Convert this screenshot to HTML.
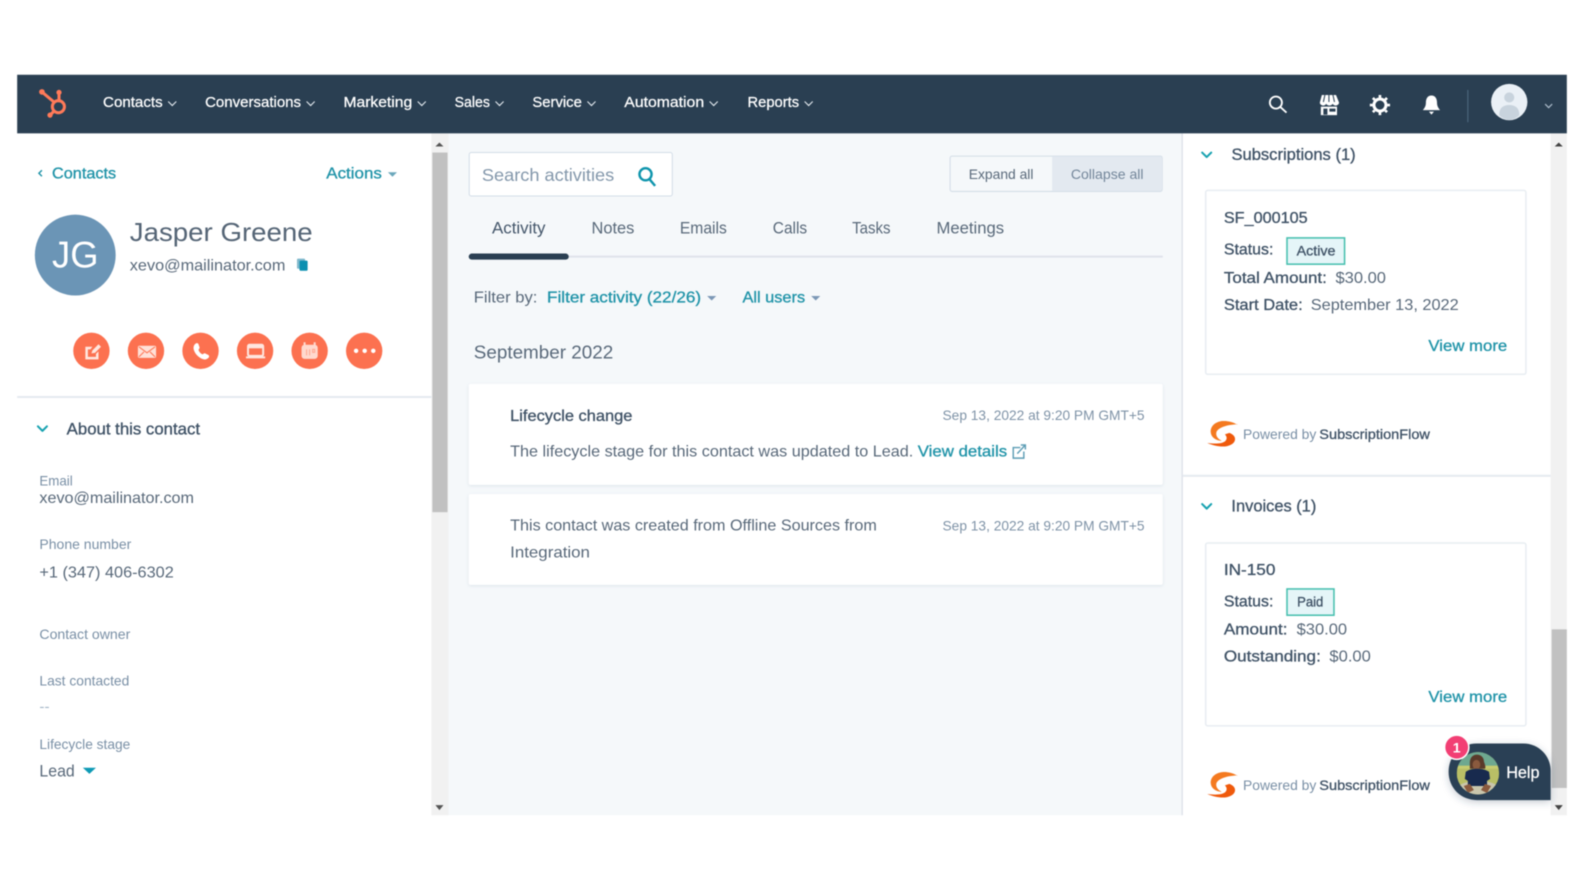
<!DOCTYPE html>
<html><head><meta charset="utf-8"><title>Jasper Greene</title>
<style>
html,body{margin:0;padding:0;background:#fff;width:1584px;height:891px;overflow:hidden}
svg{display:block;filter:blur(.45px)}
text{font-family:"Liberation Sans",sans-serif;fill:#33475b;font-size:15px}
.n{fill:#fff;font-size:15px;stroke:#fff;stroke-width:.25}
.m{fill:#3f5266;stroke:#3f5266;stroke-width:.3}
.l{fill:#1f93a8;font-size:15.5px;stroke:#1f93a8;stroke-width:.3}
.g{fill:#516f90;font-size:14px}
.t{fill:#59697a;font-size:16px}
.c{fill:none;stroke:#fff;stroke-width:1.2}
.tl{fill:none;stroke:#17a2b0;stroke-width:2;stroke-linecap:round;stroke-linejoin:round}
.gb{fill:#59697a}
</style></head><body>
<svg width="1584" height="891" viewBox="0 0 1568 882" xmlns="http://www.w3.org/2000/svg">
<defs>
<filter id="sh" x="-5%" y="-10%" width="110%" height="125%"><feDropShadow dx="0" dy="1" stdDeviation="1.5" flood-color="#a0b4c8" flood-opacity=".3"/></filter>
<filter id="sh2" x="-20%" y="-20%" width="140%" height="150%"><feDropShadow dx="0" dy="2" stdDeviation="4" flood-color="#33475b" flood-opacity=".28"/></filter>
<g id="sfl"><path d="M30 4.500C25 1.500 20 .5 15 .8 8 1.500 3 6 3.500 12c.4 5 5 8 11 8.500-3.500-2-6-4.500-5.500-8 .8-4.500 9-8 21-8.500z" fill="#f47a20"/><path d="M22 12.500c4 1.500 6 4 5.500 7-.8 4-6 6.500-12 6.500-5 0-10-1.200-15.500-3.500 8 1 15 .8 18-2 2-2 1.500-4.500-.5-6.500z" fill="#ef5a0c"/></g>
</defs>
<rect width="1568" height="882" fill="#fff"/>

<!-- app panels -->
<rect x="17" y="132" width="410" height="675" fill="#fff"/>
<rect x="427" y="132" width="17" height="675" fill="#f1f1f1"/>
<rect x="428" y="151" width="15" height="356" fill="#c1c1c1"/>
<path d="M431 145l4-4 4 4zM431 797l4 5 4-5z" fill="#555"/>
<rect x="444" y="132" width="726" height="675" fill="#f5f8fa"/>
<rect x="1169.500" y="132" width="1.500" height="675" fill="#dfe3eb"/>
<rect x="1171" y="132" width="364.500" height="675" fill="#fff"/>
<rect x="1535" y="132" width="16" height="675" fill="#f1f1f1"/>
<rect x="1536" y="623" width="15" height="157" fill="#c1c1c1"/>
<path d="M1539 145l4-4 4 4zM1539 797l4 5 4-5z" fill="#444"/>

<!-- nav -->
<rect x="17" y="74" width="1534" height="58" fill="#2a3f52"/>
<g fill="none" stroke="#ff7a59" stroke-width="3" stroke-linecap="round">
<circle cx="57.800" cy="105.600" r="6"/>
<path d="M41.500 91L52.800 100.500M58.400 91.800v8M53.500 110l-4 4"/>
</g>
<circle cx="41.500" cy="91" r="2.800" fill="#ff7a59"/><circle cx="58.400" cy="91.500" r="2.600" fill="#ff7a59"/><circle cx="49.500" cy="114" r="2.600" fill="#ff7a59"/>
<text class="n" x="102" y="106" textLength="59" lengthAdjust="spacingAndGlyphs">Contacts</text>
<text class="n" x="203" y="106" textLength="95" lengthAdjust="spacingAndGlyphs">Conversations</text>
<text class="n" x="340" y="106" textLength="68" lengthAdjust="spacingAndGlyphs">Marketing</text>
<text class="n" x="450" y="106" textLength="35" lengthAdjust="spacingAndGlyphs">Sales</text>
<text class="n" x="527" y="106" textLength="49" lengthAdjust="spacingAndGlyphs">Service</text>
<text class="n" x="618" y="106" textLength="79" lengthAdjust="spacingAndGlyphs">Automation</text>
<text class="n" x="740" y="106" textLength="51" lengthAdjust="spacingAndGlyphs">Reports</text>
<path d="M166.500 100.500l4 4 4-4M303.500 100.500l4 4 4-4M413.500 100.500l4 4 4-4M490.500 100.500l4 4 4-4M581.500 100.500l4 4 4-4M702.500 100.500l4 4 4-4M796.500 100.500l4 4 4-4" fill="none" stroke="#dfe6ec" stroke-width="1.100"/>
<!-- right nav icons -->
<g fill="none" stroke="#fff" stroke-width="1.800"><circle cx="1263" cy="101.500" r="6"/><path d="M1267.500 106l6 5.500"/></g>
<g fill="#fff"><path d="M1308.500 94h14l3 7.500c0 2-2 3-3.500 3-1.300 0-2.300-.8-2.800-1.800-.5 1-1.600 1.800-3.200 1.800s-2.700-.8-3.200-1.800c-.5 1-1.500 1.800-2.800 1.800-1.500 0-3.500-1-3.500-3z"/><path d="M1307.500 105.500h16V114h-16z"/></g>
<path d="M1311.500 94l-1.500 7M1315.500 94v7M1319.500 94l1.500 7" stroke="#2a3f52" stroke-width="1"/>
<rect x="1310" y="107.500" width="4" height="6" fill="#2a3f52"/><rect x="1316" y="107.500" width="6" height="3" fill="#2a3f52"/>
<circle cx="1366" cy="104" r="6" fill="none" stroke="#fff" stroke-width="3"/>
<path d="M1366 94v20M1356 104h20M1359 97l14 14M1373 97l-14 14" stroke="#fff" stroke-width="2.600" stroke-dasharray="2.600 14.800"/>
<path d="M1417 94.500c4 0 5.500 3.500 5.500 7 0 4 1.500 5.500 3 7.500h-17c1.500-2 3-3.500 3-7.500 0-3.500 1.500-7 5.500-7zM1414.500 110.500h5l-2.500 3z" fill="#fff"/>
<rect x="1452.500" y="89" width="1" height="32" fill="#4f6b82"/>
<circle cx="1494" cy="101" r="18" fill="#eaf0f6"/>
<circle cx="1494" cy="96.500" r="5" fill="#c8d3dd"/>
<path d="M1484 114c0-7 4-10 10-10s10 3 10 10c-3 3-6 4.500-10 4.500s-7-1.500-10-4.500z" fill="#c8d3dd"/>
<path d="M1529.500 103l3.500 3.500 3.500-3.500" fill="none" stroke="#a9b9c8" stroke-width="1.200"/>

<!-- left panel -->
<path d="M41.500 168.500l-3 3 3 3" fill="none" stroke="#1f93a8" stroke-width="1.400"/>
<text class="l" x="51.500" y="176.500" textLength="63.500" lengthAdjust="spacingAndGlyphs">Contacts</text>
<text class="l" x="323" y="176.500" textLength="55" lengthAdjust="spacingAndGlyphs">Actions</text>
<path d="M384 170.500h9l-4.500 4.500z" fill="#6ba7bb"/>
<circle cx="74.500" cy="252.500" r="40" fill="#6b95b6"/>
<text x="74.500" y="265" text-anchor="middle" textLength="46" lengthAdjust="spacingAndGlyphs" style="fill:#fff;font-size:37px">JG</text>
<text x="128.500" y="238.500" textLength="181" lengthAdjust="spacingAndGlyphs" style="font-size:26px;fill:#556576">Jasper Greene</text>
<text x="128.500" y="268" textLength="154" lengthAdjust="spacingAndGlyphs" class="gb" style="font-size:15.500px">xevo@mailinator.com</text>
<rect x="294" y="256" width="8" height="10" rx="1" fill="#7fb8cc"/><rect x="296.500" y="258" width="8" height="10" rx="1" fill="#0a8fb0"/>

<g transform="translate(.5 .3)">
<g fill="#fc7150"><circle cx="90" cy="347" r="18"/><circle cx="144" cy="347" r="18"/><circle cx="198" cy="347" r="18"/><circle cx="252" cy="347" r="18"/><circle cx="306" cy="347" r="18"/><circle cx="360" cy="347" r="18"/></g>
<path d="M84 343h7l-2 2.500h-2.500v7.500h8v-3l2.500-2.500V355.500H84z" fill="#ffe6df"/><path d="M90 349.500l1-3 6-6 2.500 2.500-6 6z" fill="#ffe6df"/>
<rect x="136" y="342" width="18" height="12" rx="1.500" fill="#ffe1d8"/><path d="M137 343l8 6 8-6M137 353l5-5M153 353l-5-5" fill="none" stroke="#ff7a59" stroke-width="1.100"/>
<path d="M193 340c1-1 2.500-1 3 .5l1 3c.3 1-.5 1.500-1 2.500.5 2 2 3.500 4 4.500 1-.5 1.500-1.300 2.500-1l3 1.500c1.300.7 1.300 2 .3 3-2 2-4.500 2-7.500.3-3.500-2-6-5-7-8.500-.5-2.500 0-4.500 1.700-5.800z" fill="#fff"/>
<rect x="245" y="341" width="15" height="11" rx="1.500" fill="none" stroke="#ffe6df" stroke-width="2"/><rect x="245" y="341" width="15" height="3.500" fill="#ffe6df"/><path d="M243 353.500h19" stroke="#ffe6df" stroke-width="2"/>
<rect x="298" y="341" width="16" height="14" rx="3" fill="#ffd9ce"/><path d="M301 338.500v4M311 338.500v4" stroke="#ffd9ce" stroke-width="2"/><path d="M303 345.500v6M306 345.500v6M309 345.500h2v3h-2z" stroke="#ffa58e" stroke-width="1" fill="none"/>
<circle cx="352" cy="347" r="2.200" fill="#fff"/><circle cx="360.500" cy="347" r="2.200" fill="#fff"/><circle cx="369" cy="347" r="2.200" fill="#fff"/>
</g>

<rect x="17" y="392" width="410" height="2" fill="#e5eaf0"/>
<path d="M37.500 422l4.500 4.500 4.500-4.500" class="tl"/>
<text class="m" x="66" y="430" textLength="132" lengthAdjust="spacingAndGlyphs" style="font-size:16px">About this contact</text>
<text x="39" y="480.500" textLength="33" lengthAdjust="spacingAndGlyphs" style="font-size:13.500px;fill:#7a90a6">Email</text>
<text class="t" x="39" y="498" textLength="153" lengthAdjust="spacingAndGlyphs" style="font-size:15.500px">xevo@mailinator.com</text>
<text x="39" y="543.500" textLength="91" lengthAdjust="spacingAndGlyphs" style="font-size:13.500px;fill:#7a90a6">Phone number</text>
<text class="t" x="39" y="571.500" textLength="133" lengthAdjust="spacingAndGlyphs" style="font-size:15.500px">+1 (347) 406-6302</text>
<text x="39" y="632.500" textLength="90" lengthAdjust="spacingAndGlyphs" style="font-size:13.500px;fill:#7a90a6">Contact owner</text>
<text x="39" y="678.500" textLength="89" lengthAdjust="spacingAndGlyphs" style="font-size:13.500px;fill:#7a90a6">Last contacted</text>
<text x="39" y="704" textLength="10" lengthAdjust="spacingAndGlyphs" style="font-size:13.500px;fill:#9fb2c4">--</text>
<text x="39" y="741.500" textLength="90" lengthAdjust="spacingAndGlyphs" style="font-size:13.500px;fill:#7a90a6">Lifecycle stage</text>
<text class="t" x="39" y="768.500" textLength="35" lengthAdjust="spacingAndGlyphs">Lead</text>
<path d="M82 760h13l-6.500 6z" fill="#0e9ab5"/>

<!-- middle -->
<rect x="464.500" y="151" width="201" height="43" rx="2" fill="#fff" stroke="#d3dde7"/>
<text x="477" y="179" textLength="131" lengthAdjust="spacingAndGlyphs" style="font-size:17px;fill:#8397ab">Search activities</text>
<g fill="none" stroke="#0f95ad" stroke-width="2.400"><circle cx="639" cy="172.500" r="6"/><path d="M643 177.500l5.500 6.500"/></g>
<rect x="940.500" y="154.500" width="210" height="35" rx="2" fill="#f5f8fa" stroke="#d3dde7"/>
<path d="M1041.500 155h107a2 2 0 0 1 2 2v30a2 2 0 0 1-2 2h-107z" fill="#e3e9f0"/>
<text x="959" y="177" textLength="64" lengthAdjust="spacingAndGlyphs" class="gb" style="font-size:14px">Expand all</text>
<text x="1060" y="177" textLength="72" lengthAdjust="spacingAndGlyphs" style="font-size:14px;fill:#73869a">Collapse all</text>
<text x="487" y="231" textLength="53" lengthAdjust="spacingAndGlyphs" style="font-size:16px;fill:#44566a">Activity</text>
<text x="585.500" y="231" textLength="42.500" lengthAdjust="spacingAndGlyphs" class="gb" style="font-size:16px">Notes</text>
<text x="673" y="231" textLength="46.500" lengthAdjust="spacingAndGlyphs" class="gb" style="font-size:16px">Emails</text>
<text x="765" y="231" textLength="34" lengthAdjust="spacingAndGlyphs" class="gb" style="font-size:16px">Calls</text>
<text x="843.500" y="231" textLength="38" lengthAdjust="spacingAndGlyphs" class="gb" style="font-size:16px">Tasks</text>
<text x="927" y="231" textLength="67" lengthAdjust="spacingAndGlyphs" class="gb" style="font-size:16px">Meetings</text>
<rect x="464" y="253" width="687" height="2" fill="#dfe3eb"/>
<rect x="464" y="251" width="99" height="6" rx="3" fill="#2a3f52"/>
<text x="469" y="299.500" textLength="63" lengthAdjust="spacingAndGlyphs" class="gb" style="font-size:15.500px">Filter by:</text>
<text class="l" x="541.500" y="299.500" textLength="152.500" lengthAdjust="spacingAndGlyphs">Filter activity (22/26)</text>
<path d="M700 293h9l-4.500 4.500z" fill="#7c98b6"/>
<text class="l" x="735" y="299.500" textLength="62" lengthAdjust="spacingAndGlyphs">All users</text>
<path d="M803 293h9l-4.500 4.500z" fill="#7c98b6"/>
<text x="469" y="355" textLength="138" lengthAdjust="spacingAndGlyphs" class="gb" style="font-size:18px">September 2022</text>

<rect x="464" y="380" width="687" height="100" rx="2" fill="#fff" filter="url(#sh)"/>
<text class="m" x="505" y="416.500" textLength="121" lengthAdjust="spacingAndGlyphs" style="font-size:15.500px">Lifecycle change</text>
<text x="933" y="416" textLength="200" lengthAdjust="spacingAndGlyphs" style="font-size:14px;fill:#7f93a7">Sep 13, 2022 at 9:20 PM GMT+5</text>
<text x="505" y="452" textLength="399" lengthAdjust="spacingAndGlyphs" class="gb" style="font-size:15.500px">The lifecycle stage for this contact was updated to Lead.</text>
<text class="l" x="908.500" y="452" textLength="88.500" lengthAdjust="spacingAndGlyphs">View details</text>
<g fill="none" stroke="#5d9db5" stroke-width="1.400"><path d="M1010 443h-7v10.500h10.500V447"/><path d="M1007 449l7.500-8M1010.500 440.500h4.500v4.500"/></g>

<rect x="464" y="489" width="687" height="90" rx="2" fill="#fff" filter="url(#sh)"/>
<text x="505" y="525" textLength="363" lengthAdjust="spacingAndGlyphs" class="gb" style="font-size:15.500px">This contact was created from Offline Sources from</text>
<text x="505" y="552" textLength="79" lengthAdjust="spacingAndGlyphs" class="gb" style="font-size:15.500px">Integration</text>
<text x="933" y="525" textLength="200" lengthAdjust="spacingAndGlyphs" style="font-size:14px;fill:#7f93a7">Sep 13, 2022 at 9:20 PM GMT+5</text>

<!-- right -->
<path d="M1190 151l4.500 4.500 4.500-4.500" class="tl"/>
<text class="m" x="1219" y="158.500" textLength="123" lengthAdjust="spacingAndGlyphs" style="font-size:16px">Subscriptions (1)</text>
<rect x="1193.500" y="188.500" width="317" height="182" rx="2" fill="#fff" stroke="#e8edf2" stroke-width="1.500"/>
<text class="m" x="1211.500" y="220.500" textLength="83" lengthAdjust="spacingAndGlyphs" style="font-size:15.500px">SF_000105</text>
<text class="m" x="1211.500" y="252" textLength="49" lengthAdjust="spacingAndGlyphs" style="font-size:15.500px">Status:</text>
<rect x="1274" y="235.500" width="57" height="26" fill="#e5f5f8" stroke="#45bfae" stroke-width="1.500"/>
<text class="m" x="1283.500" y="253" textLength="38.500" lengthAdjust="spacingAndGlyphs" style="font-size:14px">Active</text>
<text class="m" x="1211.500" y="280" textLength="102" lengthAdjust="spacingAndGlyphs" style="font-size:15.500px">Total Amount:</text>
<text x="1322" y="280" textLength="50" lengthAdjust="spacingAndGlyphs" class="gb" style="font-size:15.500px">$30.00</text>
<text class="m" x="1211.500" y="307" textLength="78" lengthAdjust="spacingAndGlyphs" style="font-size:15.500px">Start Date:</text>
<text x="1297.500" y="307" textLength="146.500" lengthAdjust="spacingAndGlyphs" class="gb" style="font-size:15.500px">September 13, 2022</text>
<text class="l" x="1414" y="347.500" textLength="78" lengthAdjust="spacingAndGlyphs">View more</text>
<use href="#sfl" x="1195" y="416"/>
<text x="1230.500" y="434.500" textLength="72.500" lengthAdjust="spacingAndGlyphs" style="font-size:14px;fill:#7a90a6">Powered by</text>
<text class="m" x="1306" y="434.500" textLength="109.500" lengthAdjust="spacingAndGlyphs" style="font-size:14px">SubscriptionFlow</text>
<rect x="1171" y="470" width="364" height="2" fill="#e5eaf0"/>

<path d="M1190 499l4.500 4.500 4.500-4.500" class="tl"/>
<text class="m" x="1219" y="506.500" textLength="84" lengthAdjust="spacingAndGlyphs" style="font-size:16px">Invoices (1)</text>
<rect x="1193.500" y="537.500" width="317" height="181" rx="2" fill="#fff" stroke="#e8edf2" stroke-width="1.500"/>
<text class="m" x="1211.500" y="569" textLength="51" lengthAdjust="spacingAndGlyphs" style="font-size:15.500px">IN-150</text>
<text class="m" x="1211.500" y="600.500" textLength="49" lengthAdjust="spacingAndGlyphs" style="font-size:15.500px">Status:</text>
<rect x="1274" y="583" width="46.500" height="26" fill="#e5f5f8" stroke="#45bfae" stroke-width="1.500"/>
<text class="m" x="1284" y="600.500" textLength="26" lengthAdjust="spacingAndGlyphs" style="font-size:14px">Paid</text>
<text class="m" x="1211.500" y="628" textLength="63" lengthAdjust="spacingAndGlyphs" style="font-size:15.500px">Amount:</text>
<text x="1283.500" y="628" textLength="50" lengthAdjust="spacingAndGlyphs" class="gb" style="font-size:15.500px">$30.00</text>
<text class="m" x="1211.500" y="655" textLength="96" lengthAdjust="spacingAndGlyphs" style="font-size:15.500px">Outstanding:</text>
<text x="1316" y="655" textLength="41" lengthAdjust="spacingAndGlyphs" class="gb" style="font-size:15.500px">$0.00</text>
<text class="l" x="1414" y="695" textLength="78" lengthAdjust="spacingAndGlyphs">View more</text>
<use href="#sfl" x="1195" y="763.500"/>
<text x="1230.500" y="782" textLength="72.500" lengthAdjust="spacingAndGlyphs" style="font-size:14px;fill:#7a90a6">Powered by</text>
<text class="m" x="1306" y="782" textLength="109.500" lengthAdjust="spacingAndGlyphs" style="font-size:14px">SubscriptionFlow</text>

<!-- help -->
<path d="M1462 736h46c15 0 27 12 27 27v29h-73c-16 0-28-12-28-28s12-28 28-28z" fill="#2a4154" filter="url(#sh2)"/>
<clipPath id="av"><circle cx="1463" cy="765.500" r="21"/></clipPath>
<g clip-path="url(#av)">
<rect x="1442" y="744" width="42" height="44" fill="#b9bf66"/>
<path d="M1442 744h42v14h-42z" fill="#6ea890"/>
<path d="M1442 758h42v3h-42z" fill="#c7cc70"/>
<path d="M1444 778c6-6 32-7 38 0v10h-38z" fill="#c9c6ad"/>
<path d="M1455 755c0-5 3-8 7-8s7 3 7 7c1 3 2 5 1 7h-15z" fill="#5a3a2a"/>
<ellipse cx="1461.500" cy="757" rx="3.800" ry="4.800" fill="#8a5a3e"/>
<path d="M1451 764c3-2 6-3 11-3s9 1 12 3l1 7-3 2v5h-19v-5l-3-2z" fill="#182a4e"/>
<path d="M1449 778l6-2 4 6-6 3zM1476 778l-6-2-4 6 6 3z" fill="#8a5a3e"/>
</g>
<circle cx="1442" cy="739.700" r="12" fill="#f23f74" stroke="#fff" stroke-width="1.500"/>
<text x="1442" y="745" text-anchor="middle" style="font-size:14px;fill:#fff;font-weight:bold">1</text>
<text class="n" x="1491" y="770" textLength="33" lengthAdjust="spacingAndGlyphs" style="font-size:16px">Help</text>
</svg>
</body></html>
